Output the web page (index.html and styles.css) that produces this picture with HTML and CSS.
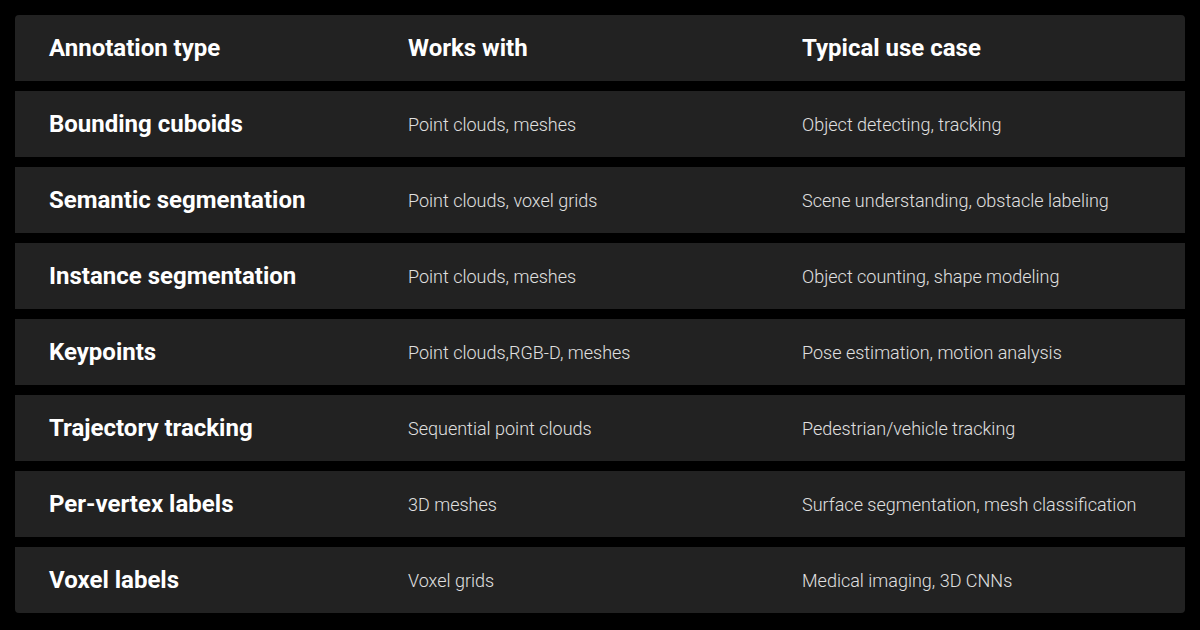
FILE: index.html
```html
<!DOCTYPE html>
<html>
<head>
<meta charset="utf-8">
<link rel="stylesheet" href="styles.css">
</head>
<body>
<div class="table">
  <div class="row head">
    <div class="c1">Annotation type</div>
    <div class="c2">Works with</div>
    <div class="c3">Typical use case</div>
  </div>
  <div class="row">
    <div class="c1">Bounding cuboids</div>
    <div class="c2">Point clouds, meshes</div>
    <div class="c3">Object detecting, tracking</div>
  </div>
  <div class="row">
    <div class="c1">Semantic segmentation</div>
    <div class="c2">Point clouds, voxel grids</div>
    <div class="c3">Scene understanding, obstacle labeling</div>
  </div>
  <div class="row">
    <div class="c1">Instance segmentation</div>
    <div class="c2">Point clouds, meshes</div>
    <div class="c3">Object counting, shape modeling</div>
  </div>
  <div class="row">
    <div class="c1">Keypoints</div>
    <div class="c2">Point clouds,RGB-D, meshes</div>
    <div class="c3">Pose estimation, motion analysis</div>
  </div>
  <div class="row">
    <div class="c1">Trajectory tracking</div>
    <div class="c2">Sequential point clouds</div>
    <div class="c3">Pedestrian/vehicle tracking</div>
  </div>
  <div class="row">
    <div class="c1">Per-vertex labels</div>
    <div class="c2">3D meshes</div>
    <div class="c3">Surface segmentation, mesh classification</div>
  </div>
  <div class="row">
    <div class="c1">Voxel labels</div>
    <div class="c2">Voxel grids</div>
    <div class="c3">Medical imaging, 3D CNNs</div>
  </div>
</div>
</body>
</html>
```

FILE: styles.css
```css
html, body {
  margin: 0;
  padding: 0;
  background: #000;
}
body {
  width: 1200px;
  height: 630px;
  padding: 15px;
  box-sizing: border-box;
  font-family: Roboto, "Liberation Sans", sans-serif;
}
.table {
  display: flex;
  flex-direction: column;
  gap: 10px;
  border-radius: 4px;
  overflow: hidden;
}
.row {
  display: grid;
  grid-template-columns: 359px 394px 1fr;
  height: 66px;
  align-items: center;
  background: #222222;
  color: #e0e0e0;
  font-size: 18px;
  font-weight: 300;
}
.row > div {
  padding-left: 34px;
}
.row .c1 {
  color: #fff;
  font-weight: 700;
  font-size: 24px;
}
.head > div {
  color: #fff;
  font-weight: 700;
  font-size: 24px;
}
```
